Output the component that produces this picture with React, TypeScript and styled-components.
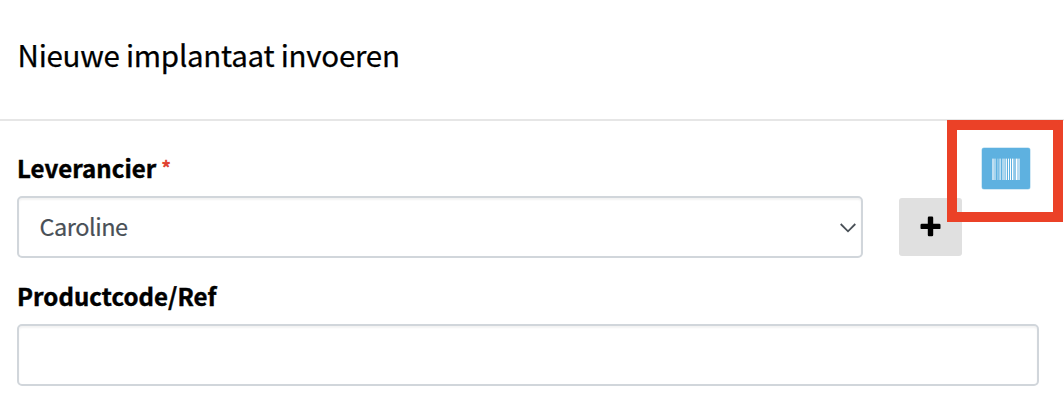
import React from "react";
import styled, { createGlobalStyle } from "styled-components";

const GlobalStyle = createGlobalStyle`
  * { box-sizing: border-box; }
  body {
    margin: 0;
    background: #fff;
    color: #000;
    font-family: "Noto Sans CJK SC", "Noto Sans", sans-serif;
  }
`;

const Page = styled.main`
  position: relative;
  width: 1064px;
  height: 406px;
  overflow: hidden;
`;

const Header = styled.header`
  height: 121px;
  padding: 32px 17.6px 0;
  border-bottom: 2px solid #e6e6e6;
`;

const Title = styled.h1`
  margin: 0;
  font-size: 29.5px;
  line-height: 44px;
  font-weight: 400;
  letter-spacing: -0.26px;
  -webkit-text-stroke: 0.25px #000;
  white-space: nowrap;
`;

const Form = styled.form`
  padding: 29px 24px 0 17px;
`;

const Label = styled.label`
  display: flex;
  height: 36px;
  font-size: 24px;
  line-height: 36px;
  font-weight: 700;
  letter-spacing: 0.07px;
  -webkit-text-stroke: 0.45px #000;
  white-space: nowrap;
`;

const Required = styled.span`
  margin-left: 5px;
  color: #e0402f;
  font-size: 21px;
  font-weight: 400;
  line-height: 37px;
  -webkit-text-stroke: 0.7px #e0402f;
`;

const Row = styled.div`
  display: flex;
  align-items: flex-start;
  gap: 36px;
  margin: 10px 0 20px;
`;

const Field = styled.div<{ $width: number }>`
  display: flex;
  align-items: center;
  justify-content: space-between;
  width: ${(p) => p.$width}px;
  height: 62px;
  padding: 0 4px 0 20.6px;
  border: 2px solid #d1d6db;
  border-radius: 5px;
  box-shadow: inset 0 2px 2px rgba(0, 0, 0, 0.05);
  color: #495057;
  font-size: 23.5px;
  line-height: 36px;
  letter-spacing: -0.48px;
`;

const Value = styled.span`
  margin-top: -3px;
  -webkit-text-stroke: 0.2px #495057;
`;

const Chevron = styled.svg`
  margin-top: 1px;
`;

const AddButton = styled.button`
  display: flex;
  align-items: center;
  justify-content: center;
  width: 63px;
  height: 58px;
  margin-top: 2px;
  padding: 0 0 2px;
  border: 0;
  border-radius: 3px;
  background: #e0e0e0;
`;

const Highlight = styled.div`
  position: absolute;
  top: 120px;
  left: 947px;
  display: flex;
  justify-content: center;
  width: 116px;
  height: 102px;
  padding: 18px 0 0 2px;
  border: 10px solid #eb4127;
`;

const ScanButton = styled.button`
  display: flex;
  align-items: center;
  justify-content: center;
  width: 48px;
  height: 41px;
  padding: 0;
  border: 0;
  border-radius: 2px;
  background: #5eb1e0;
  box-shadow: 0 0 0 0.5px #a9d5ee;
`;

const bars: [number, number, number][] = [
  [0, 2, 0.6], [2, 2, 0.45], [5, 1, 0.3], [6, 1, 0.2], [7, 1, 0.4], [8, 1, 0.6],
  [10, 3, 0.5], [13, 1, 0.35], [14, 1, 0.9], [16, 1, 1], [18, 1, 1],
  [20, 1, 1], [21, 1, 0.4], [22, 2, 0.3], [24, 1, 1], [25, 3, 0.55],
];

const Barcode = () => (
  <svg width="28" height="22" viewBox="0 0 28 22" fill="#fff" shapeRendering="crispEdges">
    {bars.map(([x, width, opacity]) => (
      <g key={x} opacity={opacity}>
        <rect x={x} y="0" width={width} height="1" opacity="0.4" />
        <rect x={x} y="1" width={width} height="21" />
      </g>
    ))}
  </svg>
);

export default function App() {
  return (
    <>
      <GlobalStyle />
      <Page>
        <Header>
          <Title>Nieuwe implantaat invoeren</Title>
        </Header>
        <Form>
          <Label>
            Leverancier<Required>*</Required>
          </Label>
          <Row>
            <Field $width={846}>
              <Value>Caroline</Value>
              <Chevron width="18" height="12" viewBox="0 0 18 12" fill="none" stroke="#495057" strokeWidth="1.8">
                <path d="M1.7 2 9 9.3 16.3 2" />
              </Chevron>
            </Field>
            <AddButton type="button" aria-label="Toevoegen">
              <svg width="21" height="21" viewBox="0 0 21 21">
                <path
                  fill="#000"
                  d="M9 .5h3q1.2 0 1.2 1.2v6h6q1.3 0 1.3 1.2v3q0 1.2-1.3 1.2h-6v6q0 1.2-1.2 1.2H9q-1.2 0-1.2-1.2v-6h-6Q.5 13.1.5 11.900v-3q0-1.200 1.300-1.200h6v-6Q7.800.5 9 .5Z"
                />
              </svg>
            </AddButton>
          </Row>
          <Label>Productcode/Ref</Label>
          <Row>
            <Field $width={1022} />
          </Row>
        </Form>
        <Highlight>
          <ScanButton type="button" aria-label="Barcode scannen">
            <Barcode />
          </ScanButton>
        </Highlight>
      </Page>
    </>
  );
}
